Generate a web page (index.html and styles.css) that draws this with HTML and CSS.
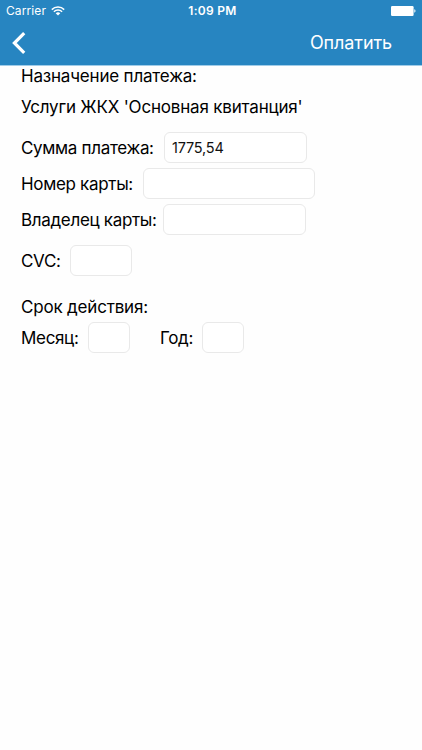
FILE: index.html
```html
<!DOCTYPE html>
<html lang="ru">
<head>
    <meta charset="UTF-8">
    <meta name="viewport" content="width=device-width, initial-scale=1.0">
    <title>Оплата</title>
    <link rel="stylesheet" href="styles.css">
</head>
<body>
    <header class="header">
        <div class="status-bar">
            <div class="carrier">
                <span>Carrier</span>
                <svg class="wifi" width="14" height="10" viewBox="0 0 14 10" fill="none" stroke="#fff" stroke-width="1.5">
                    <path d="M0.8 3.6a8.8 8.8 0 0 1 12.4 0"/>
                    <path d="M2.9 5.8a5.8 5.8 0 0 1 8.2 0"/>
                    <path d="M7 9.5L4.7 7.3a3.3 3.3 0 0 1 4.6 0z" fill="#fff" stroke="none"/>
                </svg>
            </div>
            <span class="time">1:09 PM</span>
            <svg class="battery" width="25" height="10" viewBox="0 0 25 10" fill="#fff">
                <rect x="0" y="0" width="22.6" height="10" rx="1.2"/>
                <path d="M23.3 3.3c1.6 0.3 1.6 3.1 0 3.4z"/>
            </svg>
        </div>
        <div class="nav">
            <a href="#" class="back" aria-label="Назад">
                <svg width="14" height="22" viewBox="0 0 14 22" fill="none" stroke="#fff" stroke-width="3.2">
                    <path d="M12.2 1.2L2.4 11l9.8 9.8"/>
                </svg>
            </a>
            <button type="submit" form="paymentForm" class="pay">Оплатить</button>
        </div>
    </header>

    <form id="paymentForm" class="form">
        <p class="caption">Назначение платежа:</p>
        <p class="purpose">Услуги ЖКХ 'Основная квитанция'</p>

        <div class="row">
            <label for="amount" class="label-amount">Сумма платежа:</label>
            <input type="text" id="amount" class="field-medium" value="1775,54">
        </div>
        <div class="row">
            <label for="card" class="label-card">Номер карты:</label>
            <input type="text" id="card" class="field-large">
        </div>
        <div class="row">
            <label for="owner" class="label-owner">Владелец карты:</label>
            <input type="text" id="owner" class="field-medium">
        </div>
        <div class="row row-cvc">
            <label for="cvc" class="label-cvc">CVC:</label>
            <input type="text" id="cvc" class="field-small">
        </div>

        <p class="expiry">Срок действия:</p>
        <div class="row">
            <label for="month" class="label-month">Месяц:</label>
            <input type="text" id="month" class="field-tiny">
            <label for="year" class="label-year">Год:</label>
            <input type="text" id="year" class="field-tiny">
        </div>
    </form>
</body>
</html>
```

FILE: styles.css
```css
* {
    box-sizing: border-box;
}
body {
    margin: 0;
    font-family: Inter, "Noto Sans", sans-serif;
    font-size: 17px;
    color: #000;
    background-color: #fefefe;
}
p {
    margin: 0;
    letter-spacing: -0.19px;
}
.header {
    height: 66px;
    background-color: #2785c1;
    border-bottom: 1px solid #a0cce8;
    color: white;
}
.status-bar {
    display: grid;
    grid-template-columns: 1fr auto 1fr;
    align-items: center;
    height: 22px;
    padding: 0 6px;
    font-size: 12px;
}
.carrier {
    display: flex;
    align-items: center;
    gap: 5px;
    letter-spacing: 0.1px;
}
.carrier span,
.time {
    padding-bottom: 1px;
}
.time {
    padding-left: 3px;
    font-weight: 600;
    letter-spacing: 0.3px;
}
.battery {
    justify-self: end;
}
.nav {
    display: flex;
    justify-content: space-between;
    align-items: center;
    height: 42px;
    padding: 0 30px 0 12px;
}
.back {
    display: flex;
}
.pay {
    padding: 0 0 2px;
    border: none;
    background: none;
    color: white;
    font-family: inherit;
    font-size: 18px;
    letter-spacing: -0.1px;
    cursor: pointer;
}
.form {
    padding-left: 21px;
}
.caption {
    height: 26px;
    line-height: 21px;
}
.purpose {
    height: 40px;
    line-height: 31px;
}
.row {
    display: flex;
    align-items: center;
    height: 31px;
    margin-bottom: 5px;
}
.row-cvc {
    margin: 10px 0 15px;
}
.expiry {
    height: 31px;
    line-height: 32px;
}
.row input {
    height: 31px;
    padding: 0 7px;
    border: 1px solid #e9e9e9;
    border-radius: 6px;
    background-color: white;
    color: #111;
    font-family: inherit;
    font-size: 14.5px;
    letter-spacing: -0.2px;
}
.row label {
    padding-top: 1px;
    letter-spacing: -0.32px;
    white-space: nowrap;
}
.label-amount {
    width: 143px;
}
.label-card {
    width: 122px;
}
.label-owner {
    width: 142px;
}
.label-cvc {
    width: 49px;
}
.label-month {
    width: 67px;
}
.label-year {
    width: 42px;
    margin-left: 30px;
}
.field-large {
    width: 172px;
}
.field-medium {
    width: 143px;
}
.field-small {
    width: 62px;
}
.field-tiny {
    width: 42px;
}
```
